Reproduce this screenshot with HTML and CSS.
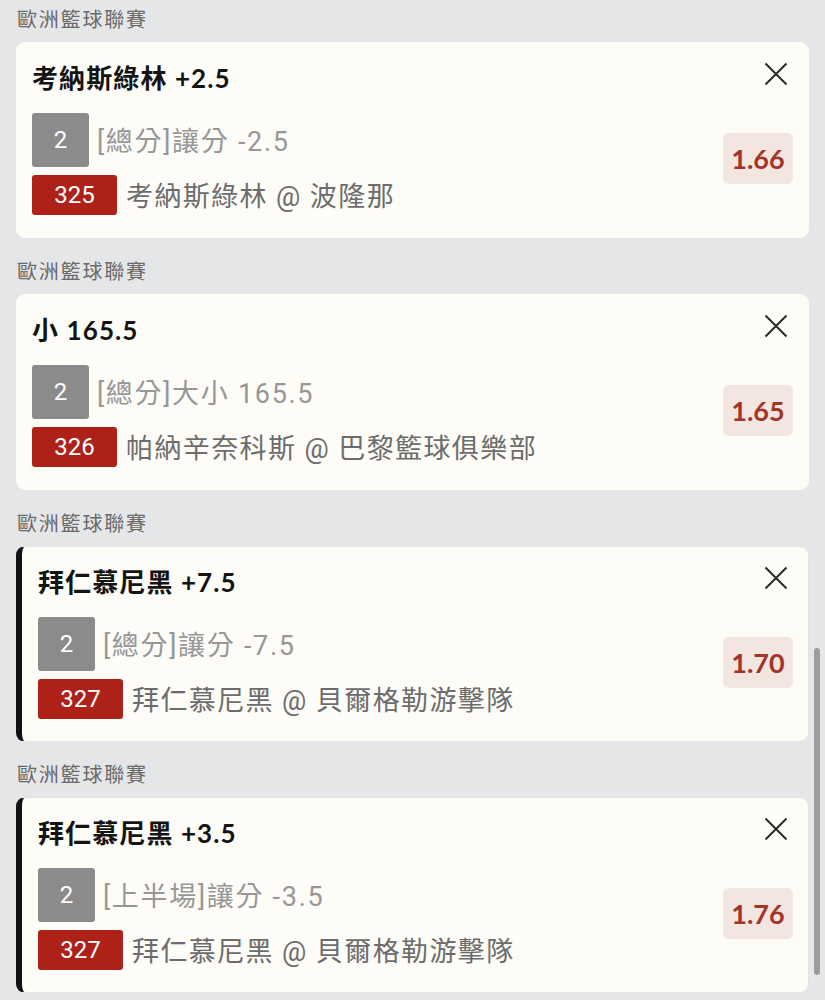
FILE: index.html
```html
<!DOCTYPE html>
<html lang="zh-Hant">
<head>
<meta charset="utf-8">
<title>投注單</title>
<link rel="stylesheet" href="styles.css">
</head>
<body>
<div class="list">
  <section class="group">
    <div class="league">歐洲籃球聯賽</div>
    <div class="card">
      <div class="title">考納斯綠林 +2.5</div>
      <button class="close" aria-label="關閉"><svg viewBox="0 0 24 24" width="24" height="24"><path d="M1.5 1.5L22.5 22.5M22.5 1.5L1.5 22.5" stroke="#2a2a2a" stroke-width="2" fill="none"/></svg></button>
      <div class="lines">
        <div class="row"><span class="badge grey">2</span><span class="market">[總分]讓分 -2.5</span></div>
        <div class="row"><span class="badge red">325</span><span class="match">考納斯綠林 @ 波隆那</span></div>
      </div>
      <div class="odds">1.66</div>
    </div>
  </section>
  <section class="group">
    <div class="league">歐洲籃球聯賽</div>
    <div class="card">
      <div class="title">小 165.5</div>
      <button class="close" aria-label="關閉"><svg viewBox="0 0 24 24" width="24" height="24"><path d="M1.5 1.5L22.5 22.5M22.5 1.5L1.5 22.5" stroke="#2a2a2a" stroke-width="2" fill="none"/></svg></button>
      <div class="lines">
        <div class="row"><span class="badge grey">2</span><span class="market">[總分]大小 165.5</span></div>
        <div class="row"><span class="badge red">326</span><span class="match">帕納辛奈科斯 @ 巴黎籃球俱樂部</span></div>
      </div>
      <div class="odds">1.65</div>
    </div>
  </section>
  <section class="group">
    <div class="league">歐洲籃球聯賽</div>
    <div class="card marked">
      <div class="title">拜仁慕尼黑 +7.5</div>
      <button class="close" aria-label="關閉"><svg viewBox="0 0 24 24" width="24" height="24"><path d="M1.5 1.5L22.5 22.5M22.5 1.5L1.5 22.5" stroke="#2a2a2a" stroke-width="2" fill="none"/></svg></button>
      <div class="lines">
        <div class="row"><span class="badge grey">2</span><span class="market">[總分]讓分 -7.5</span></div>
        <div class="row"><span class="badge red">327</span><span class="match">拜仁慕尼黑 @ 貝爾格勒游擊隊</span></div>
      </div>
      <div class="odds">1.70</div>
    </div>
  </section>
  <section class="group">
    <div class="league">歐洲籃球聯賽</div>
    <div class="card marked">
      <div class="title">拜仁慕尼黑 +3.5</div>
      <button class="close" aria-label="關閉"><svg viewBox="0 0 24 24" width="24" height="24"><path d="M1.5 1.5L22.5 22.5M22.5 1.5L1.5 22.5" stroke="#2a2a2a" stroke-width="2" fill="none"/></svg></button>
      <div class="lines">
        <div class="row"><span class="badge grey">2</span><span class="market">[上半場]讓分 -3.5</span></div>
        <div class="row"><span class="badge red">327</span><span class="match">拜仁慕尼黑 @ 貝爾格勒游擊隊</span></div>
      </div>
      <div class="odds">1.76</div>
    </div>
  </section>
</div>
<div class="scrollbar"></div>
</body>
</html>
```

FILE: styles.css
```css
html, body {
  margin: 0;
  padding: 0;
  background: #e5e6e8;
  height: 1000px;
  overflow: hidden;
}
body {
  position: relative;
  font-family: Roboto, "Noto Sans CJK TC", sans-serif;
}
.list {
  padding: 5px 16px 0 16px;
  display: flex;
  flex-direction: column;
  gap: 19px;
}
.league {
  font-family: "Noto Sans CJK TC", sans-serif;
  font-size: 20px;
  line-height: 28px;
  letter-spacing: 1.8px;
  color: #6a6a6a;
  padding-left: 1px;
  margin-bottom: 9px;
}
.group + .group + .group + .group {
  margin-top: -1px;
}
.card {
  background: #fdfcf6;
  border-radius: 9px;
  padding: 18px 16px 23px 16px;
  display: grid;
  grid-template-columns: 1fr auto;
  grid-template-rows: 36px auto;
  row-gap: 17px;
}
.card.marked {
  border-left: 6px solid #111;
  border-top: 1px solid #e2e2de;
  border-right: 1px solid #e2e2de;
  border-bottom: 1px solid #e2e2de;
  padding: 17px 15px 22px 16px;
}
.title {
  font-family: Lato, "Noto Sans CJK TC", sans-serif;
  font-weight: 700;
  font-size: 26px;
  line-height: 36px;
  letter-spacing: 1.1px;
  color: #141414;
}
.close {
  border: 0;
  background: none;
  padding: 0;
  margin: 2px 5px 0 0;
  width: 24px;
  height: 24px;
  align-self: start;
  justify-self: end;
  display: flex;
}
.lines {
  display: flex;
  flex-direction: column;
  gap: 8px;
}
.row {
  display: flex;
  align-items: center;
  gap: 8px;
}
.badge {
  display: flex;
  align-items: center;
  justify-content: center;
  color: #fff;
  font-family: Roboto, sans-serif;
  font-size: 24px;
  border-radius: 3px;
}
.badge.grey {
  width: 57px;
  height: 54px;
  background: #8b8b8b;
}
.badge.red {
  width: 85px;
  height: 40px;
  background: #ad2119;
}
.market {
  font-size: 27px;
  line-height: 36px;
  letter-spacing: 1.7px;
  color: #979797;
  padding-top: 4px;
}
.match {
  font-size: 27px;
  line-height: 36px;
  letter-spacing: 1.4px;
  color: #6c6c6c;
  margin-left: 1px;
  padding-top: 4px;
}
.odds {
  align-self: start;
  margin-top: 20px;
  width: 70px;
  height: 51px;
  border-radius: 6px;
  background: #f3e6e0;
  color: #a3342c;
  font-family: Lato, sans-serif;
  font-weight: 700;
  font-size: 27px;
  display: flex;
  align-items: center;
  justify-content: center;
}
.scrollbar {
  position: absolute;
  right: 5px;
  top: 648px;
  width: 6px;
  height: 327px;
  border-radius: 3px;
  background: #9c9c9e;
}
```
